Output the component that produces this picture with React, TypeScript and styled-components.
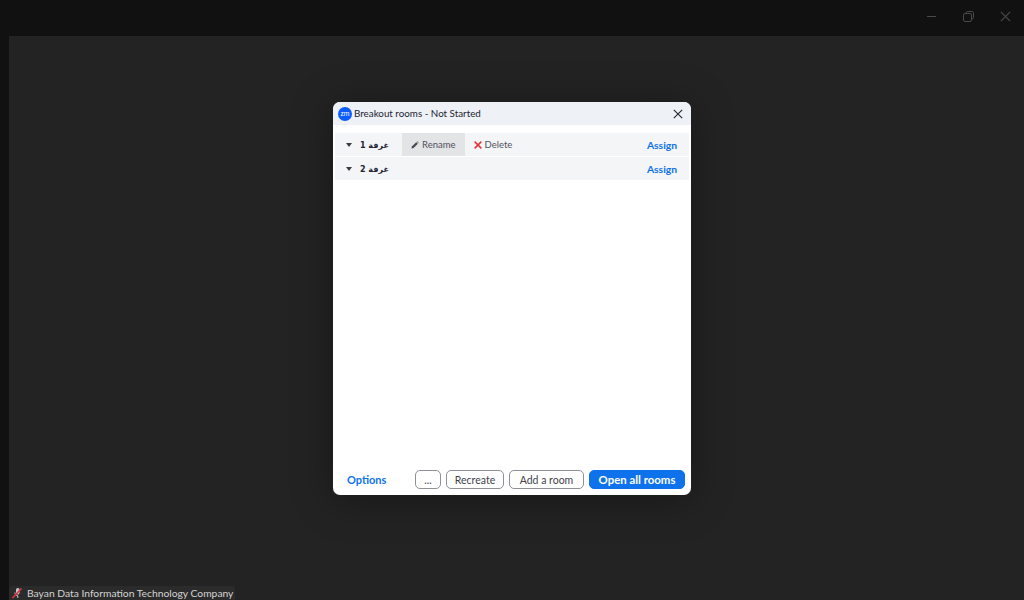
import React from 'react';
import styled, { createGlobalStyle } from 'styled-components';

const GlobalStyle = createGlobalStyle`
  html, body {
    margin: 0;
    padding: 0;
    width: 1024px;
    height: 600px;
    overflow: hidden;
    background: #111111;
    font-family: Lato, "Noto Sans", "Noto Sans CJK SC", sans-serif;
  }
`;

const Window = styled.div`
  position: relative;
  width: 1024px;
  height: 600px;
  display: flex;
  flex-direction: column;
  background: #111111;
`;

const TitleBar = styled.div`
  height: 36px;
  display: flex;
  justify-content: flex-end;
  align-items: flex-start;
  flex-shrink: 0;
`;

const WinButton = styled.div`
  width: 37px;
  height: 33px;
  display: flex;
  align-items: center;
  justify-content: center;
  color: #4a4a4a;
`;

const Stage = styled.div`
  flex: 1;
  margin-left: 9px;
  background: #232323;
  display: flex;
  flex-direction: column;
  justify-content: flex-end;
`;

const NameTag = styled.div`
  align-self: flex-start;
  height: 14px;
  display: flex;
  align-items: center;
  gap: 4px;
  padding: 0 2px 0 2px;
  background: #2b2b2b;
  border-radius: 3px 3px 0 0;
  color: #d4d4d4;
  font-size: 10.3px;
  line-height: 14px;
  white-space: nowrap;
`;

const Dialog = styled.div`
  position: absolute;
  left: 333px;
  top: 102px;
  width: 358px;
  height: 393px;
  display: flex;
  flex-direction: column;
  background: #ffffff;
  border-radius: 7px;
  overflow: hidden;
  box-shadow: 0 4px 40px rgba(0, 0, 0, 0.35);
`;

const DialogHeader = styled.div`
  height: 23px;
  display: flex;
  align-items: center;
  gap: 2px;
  padding: 0 8px 0 5px;
  background: #eef2f6;
  color: #232333;
  font-size: 9.8px;
  line-height: 21px;
  flex-shrink: 0;
`;

const HeaderTitle = styled.span`
  flex: 1;
`;

const RoomList = styled.div`
  flex: 1;
  display: flex;
  flex-direction: column;
  gap: 1px;
  padding: 8px 2px 0;
`;

const RoomRow = styled.div`
  height: 23px;
  display: flex;
  align-items: center;
  background: #f4f5f7;
  color: #232333;
  font-size: 9.5px;
`;

const RoomName = styled.div`
  width: 67px;
  padding-left: 11px;
  box-sizing: border-box;
  display: flex;
  align-items: center;
  gap: 8px;
  font-weight: 700;
  font-size: 8px;
  font-family: "DejaVu Sans", "Noto Sans", sans-serif;
`;

const RoomLabel = styled.span`
  padding-top: 2px;
`;

const Caret = styled.span`
  width: 0;
  height: 0;
  margin-top: 1px;
  border-left: 3px solid transparent;
  border-right: 3px solid transparent;
  border-top: 4px solid #3a3a44;
`;

const RowAction = styled.div<{ $active?: boolean }>`
  height: 100%;
  display: flex;
  align-items: center;
  gap: 3px;
  padding: 0 9px;
  background: ${(p) => (p.$active ? '#e3e4e6' : 'transparent')};
  color: #51515e;
`;

const Assign = styled.span`
  margin-left: auto;
  margin-right: 12px;
  color: #0e72ed;
  font-weight: 700;
  font-size: 10.3px;
`;

const Footer = styled.div`
  height: 25px;
  display: flex;
  align-items: flex-start;
  gap: 5px;
  padding: 0 6px 0 14px;
  flex-shrink: 0;
`;

const OptionsLink = styled.span`
  margin-right: auto;
  color: #0e72ed;
  font-weight: 700;
  font-size: 11px;
  line-height: 20px;
`;

const Button = styled.div<{ $primary?: boolean; $width: number }>`
  box-sizing: border-box;
  width: ${(p) => p.$width}px;
  height: 19px;
  display: flex;
  align-items: center;
  justify-content: center;
  border-radius: 5px;
  border: 1px solid ${(p) => (p.$primary ? '#0e72ed' : '#8f8f96')};
  background: ${(p) => (p.$primary ? '#0e72ed' : '#ffffff')};
  color: ${(p) => (p.$primary ? '#ffffff' : '#3f3f4a')};
  font-size: ${(p) => (p.$primary ? '11.4px' : '10.5px')};
  font-weight: ${(p) => (p.$primary ? 700 : 400)};
  white-space: nowrap;
`;

const ZoomLogo = () => (
  <svg width="14" height="14" viewBox="0 0 14 14">
    <circle cx="7" cy="7" r="7" fill="#0b5cff" />
    <text x="7" y="9" textAnchor="middle" fontSize="6.5" fontWeight="400" fill="#fff" fontFamily="Roboto, sans-serif">
      zm
    </text>
  </svg>
);

const CloseIcon = ({ size, color, weight = 1.1 }: { size: number; color: string; weight?: number }) => (
  <svg width={size} height={size} viewBox="0 0 10 10" fill="none" stroke={color} strokeWidth={weight}>
    <path d="M0.8 0.8 9.2 9.2M9.2 0.8 0.8 9.2" />
  </svg>
);

const PencilIcon = () => (
  <svg width="8" height="8" viewBox="0 0 9 9" fill="#45454f">
    <path d="M0.6 8.4 1 6.2 5.9 1.3 7.7 3.1 2.8 8Z" />
    <path d="M6.5 0.7 7 0.3 8.7 2 8.3 2.5Z" />
  </svg>
);

const MutedMic = () => (
  <svg width="12" height="12" viewBox="0 0 12 12" fill="none">
    <rect x="5" y="1" width="3.6" height="6.5" rx="1.8" fill="#c9c9c9" />
    <path d="M4 5.5c0 2 1 3.2 2.8 3.2M6.8 8.7V11" stroke="#c9c9c9" strokeWidth="1" />
    <path d="M1.5 11 10.5 1.5" stroke="#d8343f" strokeWidth="1.8" />
  </svg>
);

const rooms = [
  { id: 1, name: 'غرفة 1', hovered: true },
  { id: 2, name: 'غرفة 2', hovered: false },
];

export default function App() {
  return (
    <Window>
      <GlobalStyle />
      <TitleBar>
        <WinButton>
          <svg width="11" height="11" viewBox="0 0 11 11" stroke="currentColor" fill="none">
            <path d="M1 5.5h9" />
          </svg>
        </WinButton>
        <WinButton>
          <svg width="11" height="11" viewBox="0 0 11 11" stroke="currentColor" fill="none">
            <rect x="0.5" y="2.5" width="8" height="8" rx="1.5" />
            <path d="M3 2.5V1.8C3 1 3.5.5 4.3.5h4.9c.8 0 1.3.5 1.3 1.3v4.9c0 .8-.5 1.3-1.3 1.3h-.7" />
          </svg>
        </WinButton>
        <WinButton>
          <CloseIcon size={11} color="#4a4a4a" />
        </WinButton>
      </TitleBar>
      <Stage>
        <NameTag>
          <MutedMic />
          Bayan Data Information Technology Company
        </NameTag>
      </Stage>
      <Dialog>
        <DialogHeader>
          <ZoomLogo />
          <HeaderTitle>Breakout rooms - Not Started</HeaderTitle>
          <CloseIcon size={10} color="#232333" />
        </DialogHeader>
        <RoomList>
          {rooms.map((room) => (
            <RoomRow key={room.id}>
              <RoomName>
                <Caret />
                <RoomLabel>{room.name}</RoomLabel>
              </RoomName>
              {room.hovered && (
                <>
                  <RowAction $active>
                    <PencilIcon />
                    Rename
                  </RowAction>
                  <RowAction>
                    <CloseIcon size={8} color="#e8333e" weight={1.9} />
                    Delete
                  </RowAction>
                </>
              )}
              <Assign>Assign</Assign>
            </RoomRow>
          ))}
        </RoomList>
        <Footer>
          <OptionsLink>Options</OptionsLink>
          <Button $width={26}>...</Button>
          <Button $width={58}>Recreate</Button>
          <Button $width={75}>Add a room</Button>
          <Button $primary $width={96}>Open all rooms</Button>
        </Footer>
      </Dialog>
    </Window>
  );
}
